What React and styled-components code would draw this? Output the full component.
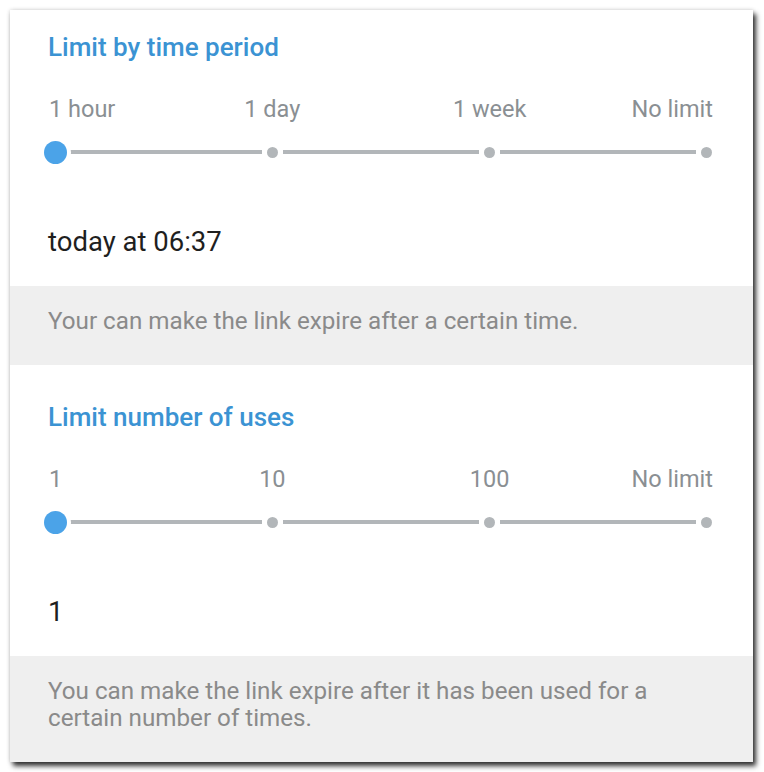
import styled, { createGlobalStyle } from 'styled-components'

const GlobalStyle = createGlobalStyle`
  html, body {
    margin: 0;
    padding: 0;
    background: #ffffff;
  }
  body {
    font-family: Roboto, 'Noto Sans', 'Liberation Sans', sans-serif;
  }
`

const Page = styled.div`
  padding: 10px 11px 14px 10px;
`

const Panel = styled.div`
  width: 743px;
  background: #ffffff;
  box-shadow: 3px 4px 5px rgba(0, 0, 0, 0.8), 0 0 4px rgba(0, 0, 0, 0.18);
  display: flex;
  flex-direction: column;
`

const Section = styled.div`
  padding: ${(props) => props.$top}px 40px 28px 38px;
  display: flex;
  flex-direction: column;
`

const Title = styled.div`
  font-size: 26px;
  line-height: 30px;
  font-weight: 500;
  color: #3b93d3;
`

const Labels = styled.div`
  margin-top: 33px;
  height: 28px;
  display: flex;
  align-items: center;
  padding-left: 1px;
`

const Anchor = styled.div`
  width: 12px;
  flex: none;
  display: flex;
  justify-content: ${(props) => props.$align};
`

const Label = styled.span`
  font-size: 23.5px;
  line-height: 28px;
  color: #8a8f93;
  white-space: nowrap;
`

const Spacer = styled.div`
  flex: 1;
`

const Track = styled.div`
  margin-top: 17px;
  height: 24px;
  display: flex;
  align-items: center;
  padding-left: 1px;
`

const Stop = styled.div`
  width: 12px;
  flex: none;
  display: flex;
  justify-content: center;
  align-items: center;
`

const Knob = styled.div`
  position: relative;
  z-index: 1;
  width: 23px;
  height: 23px;
  flex: none;
  border-radius: 50%;
  background: #4ba3e8;
  box-shadow: 0 0 0 4px #ffffff;
`

const Dot = styled.div`
  width: 11px;
  height: 11px;
  border-radius: 50%;
  background: #b2b6b9;
`

const Segment = styled.div`
  flex: 1 1 0;
  height: 4px;
  background: #b2b6b9;
  margin: 0 4.5px;
`

const Value = styled.div`
  margin-top: 62px;
  font-size: 27.5px;
  line-height: 32px;
  color: #1f1f1f;
`

const Info = styled.div`
  background: #efefef;
  padding: 22px 40px 30px 38px;
  font-size: 24.2px;
  line-height: 27px;
  color: #8a8a8a;
`

const Stops = [Knob, Dot, Dot, Dot]

function Slider({ labels }) {
  return (
    <>
      <Labels>
        {labels.map((label, i) => (
          <>
            {i > 0 && <Spacer key={'s' + i} />}
            <Anchor
              key={label}
              $align={i === 0 ? 'flex-start' : i === labels.length - 1 ? 'flex-end' : 'center'}
            >
              <Label>{label}</Label>
            </Anchor>
          </>
        ))}
      </Labels>
      <Track>
        {Stops.map((Mark, i) => (
          <>
            {i > 0 && <Segment key={'g' + i} />}
            <Stop key={i}>
              <Mark />
            </Stop>
          </>
        ))}
      </Track>
    </>
  )
}

export default function App() {
  return (
    <Page>
      <GlobalStyle />
      <Panel>
        <Section $top={22}>
          <Title>Limit by time period</Title>
          <Slider labels={['1 hour', '1 day', '1 week', 'No limit']} />
          <Value>today at 06:37</Value>
        </Section>
        <Info>Your can make the link expire after a certain time.</Info>
        <Section $top={37}>
          <Title>Limit number of uses</Title>
          <Slider labels={['1', '10', '100', 'No limit']} />
          <Value>1</Value>
        </Section>
        <Info>
          You can make the link expire after it has been used for a
          <br />
          certain number of times.
        </Info>
      </Panel>
    </Page>
  )
}
